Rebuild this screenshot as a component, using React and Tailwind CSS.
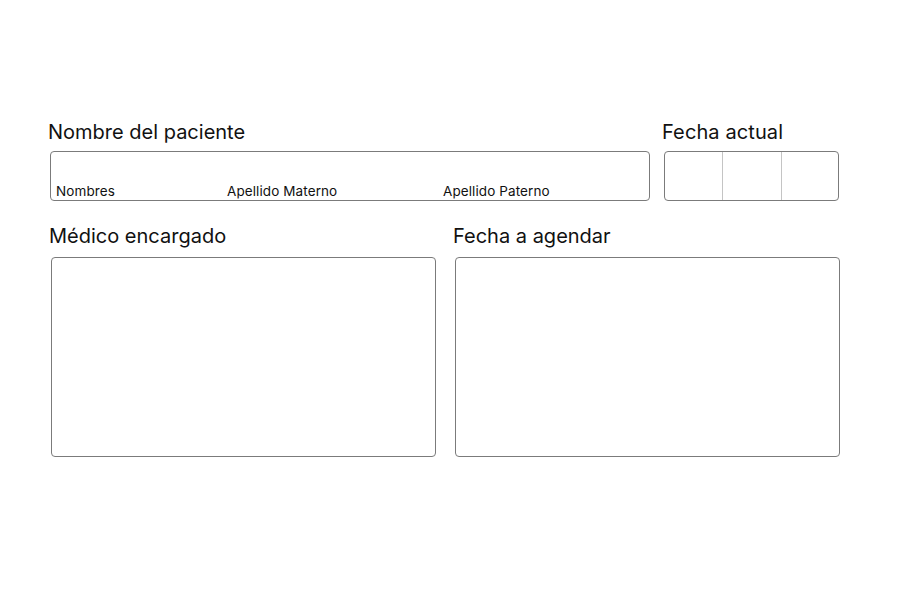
import React from 'react';

const boxBorder = 'border border-[#7b7b7b] rounded-[4px]';

const App = () => (
  <div className="w-[900px] h-[600px] bg-white pt-[119px] text-[#111]" style={{ fontFamily: 'Inter, "Noto Sans", sans-serif' }}>
    <div className="flex">
      <div className="ml-[48px] w-[602px]">
        <h2 className="text-[20px] leading-[26px]">Nombre del paciente</h2>
        <div className={`ml-[2px] mt-[6px] w-[600px] h-[50px] ${boxBorder} flex items-end text-[13.5px] leading-[18px] tracking-[0.1px]`}>
          <span className="ml-[5px] w-[171px]">Nombres</span>
          <span className="w-[216px]">Apellido Materno</span>
          <span>Apellido Paterno</span>
        </div>
      </div>
      <div className="ml-[12px]">
        <h2 className="text-[20px] leading-[26px] tracking-[0.1px]">Fecha actual</h2>
        <div className={`ml-[2px] mt-[6px] w-[175px] h-[50px] ${boxBorder} flex`}>
          <div className="w-[58px] border-r border-[#c4c4c4]" />
          <div className="w-[59px] border-r border-[#c4c4c4]" />
          <div className="flex-1" />
        </div>
      </div>
    </div>
    <div className="flex mt-[22px]">
      <div className="ml-[49px] w-[404px]">
        <h2 className="text-[20px] leading-[26px]">Médico encargado</h2>
        <div className={`ml-[2px] mt-[8px] w-[385px] h-[200px] ${boxBorder}`} />
      </div>
      <div>
        <h2 className="text-[20px] leading-[26px]">Fecha a agendar</h2>
        <div className={`ml-[2px] mt-[8px] w-[385px] h-[200px] ${boxBorder}`} />
      </div>
    </div>
  </div>
);

export default App;
